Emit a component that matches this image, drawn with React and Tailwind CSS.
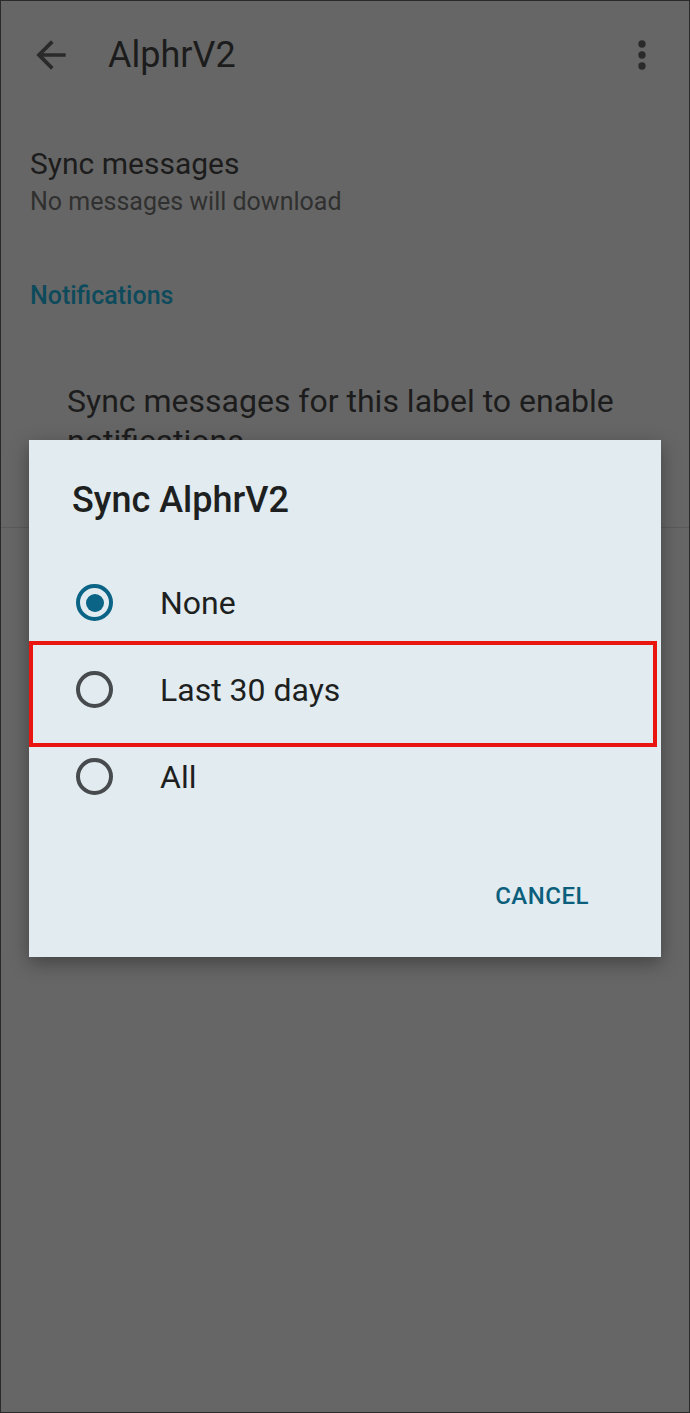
import React from 'react';

const font = { fontFamily: 'Roboto, "Noto Sans", sans-serif' };

function Radio({ checked }) {
  return (
    <span className="flex h-[37px] w-[37px] items-center justify-center rounded-full border-[4px] border-solid border-[#474b4d]"
      style={checked ? { borderColor: '#0b6485' } : undefined}>
      {checked && <span className="h-[18px] w-[18px] rounded-full bg-[#0b6485]" />}
    </span>
  );
}

function Option({ label, checked }) {
  return (
    <div className="flex h-[87px] items-center pl-[47px]">
      <Radio checked={checked} />
      <span className="ml-[47px] text-[32px] text-[#1d1f20]">{label}</span>
    </div>
  );
}

export default function App() {
  return (
    <div className="relative h-[1413px] w-[690px] overflow-hidden border border-[#2a2a2a] bg-[#666666]" style={font}>
      {/* page behind the scrim */}
      <div className="flex h-[108px] items-center">
        <svg className="ml-[28px] h-[44px] w-[44px]" viewBox="0 0 24 24" fill="#2a2a2a">
          <path d="M20 11H7.83l5.59-5.59L12 4l-8 8 8 8 1.41-1.41L7.83 13H20v-2z" />
        </svg>
        <span className="ml-[35px] text-[36px] text-[#1c1c1c]">AlphrV2</span>
        <svg className="ml-auto mr-[25px] h-[44px] w-[44px]" viewBox="0 0 24 24" fill="#2a2a2a">
          <circle cx="12" cy="6" r="2" />
          <circle cx="12" cy="12" r="2" />
          <circle cx="12" cy="18" r="2" />
        </svg>
      </div>

      <div className="mt-[37px] pl-[29px]">
        <div className="text-[30px] leading-[36px] text-[#1c1c1c]">Sync messages</div>
        <div className="mt-[2px] text-[25px] leading-[36px] text-[#303030]">No messages will download</div>
      </div>

      <div className="mt-[61px] pl-[29px] text-[25px] font-medium leading-[30px] text-[#0d4a5c]">Notifications</div>

      <div className="mt-[70px] pl-[66px] pr-[40px] text-[32px] leading-[40px] text-[#1c1c1c]">
        Sync messages for this label to enable notifications
      </div>

      <div className="mt-[66px] h-px bg-[#5a5a5a]" />

      {/* dialog */}
      <div className="absolute left-[28px] top-[439px] h-[517px] w-[632px] bg-[#e1ebf0] shadow-[0_6px_18px_rgba(0,0,0,0.35)]">
        <div className="pl-[43px] pt-[40px] text-[36px] font-medium leading-[40px] text-[#1d1f20]">Sync AlphrV2</div>
        <div className="mt-[39px]">
          <Option label="None" checked />
          <Option label="Last 30 days" />
          <Option label="All" />
        </div>
        <div className="mt-[58px] flex justify-end pr-[72px]">
          <span className="text-[24px] font-medium tracking-[0.5px] text-[#0b5f7c]">CANCEL</span>
        </div>

        {/* highlight annotation */}
        <div className="absolute left-0 top-[201px] h-[106px] w-[628px] border-[4px] border-[#e8160e]" />
      </div>
    </div>
  );
}
